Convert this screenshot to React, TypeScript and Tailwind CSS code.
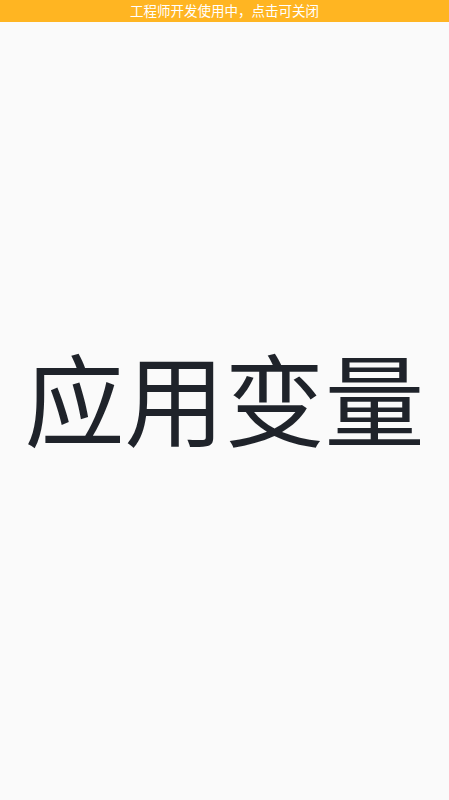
export default function App() {
  return (
    <div
      className="flex min-h-[800px] w-full flex-col bg-[#fafafa]"
      style={{ fontFamily: '"Noto Sans CJK SC", "Noto Sans", sans-serif' }}
    >
      <div className="flex h-[22px] shrink-0 items-center justify-center bg-[#ffb522] text-[13.5px] leading-none text-white">
        工程师开发使用中，点击可关闭
      </div>
      <div className="flex flex-1 items-center justify-center pb-[30px]">
        <h1 className="text-[100px] font-normal leading-none text-[#1f232a]">应用变量</h1>
      </div>
    </div>
  );
}
